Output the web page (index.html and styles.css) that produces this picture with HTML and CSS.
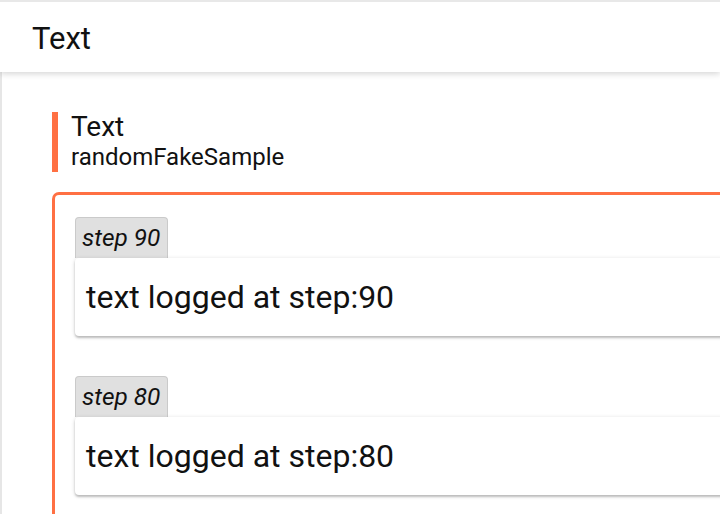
FILE: index.html
```html
<!DOCTYPE html>
<html>
<head>
<meta charset="utf-8">
<link rel="stylesheet" href="styles.css">
</head>
<body>
<div class="page">
  <header class="topbar">Text</header>
  <main class="content">
    <div class="run-title">
      <div class="tag-name">Text</div>
      <div class="run-name">randomFakeSample</div>
    </div>
    <section class="run-box">
      <div class="entry">
        <div class="step-tab">step 90</div>
        <div class="entry-card">text logged at step:90</div>
      </div>
      <div class="entry">
        <div class="step-tab">step 80</div>
        <div class="entry-card">text logged at step:80</div>
      </div>
    </section>
  </main>
</div>
</body>
</html>
```
FILE: styles.css
```css
html, body {
  margin: 0;
  padding: 0;
  overflow: hidden;
  background: #fff;
}
body {
  font-family: Roboto, "Liberation Sans", sans-serif;
  color: #111;
}
.page {
  border-top: 2px solid #e8e8e8;
  height: 100vh;
  box-sizing: border-box;
  display: flex;
  flex-direction: column;
  overflow: hidden;
}
.topbar {
  position: relative;
  z-index: 2;
  flex: none;
  height: 70px;
  box-sizing: border-box;
  padding: 19px 0 0 32px;
  font-size: 31px;
  line-height: 36px;
  background: #fff;
  box-shadow: 0 2px 6px rgba(0, 0, 0, 0.16);
}
.content {
  flex: 1;
  min-height: 0;
  overflow: hidden;
  border-left: 2px solid #e6e6e6;
  padding: 40px 0 0 50px;
}
.run-title {
  border-left: 6px solid #ff7043;
  padding-left: 13px;
  height: 60px;
  box-sizing: border-box;
}
.tag-name {
  font-size: 28px;
  line-height: 30px;
}
.run-name {
  font-size: 24px;
  line-height: 30px;
}
.run-box {
  margin-top: 20px;
  margin-right: -40px;
  border-left: 3px solid #ff7043;
  border-top: 3px solid #ff7043;
  border-top-left-radius: 7px;
  padding: 22px 0 40px 20px;
}
.entry {
  margin-bottom: 40px;
}
.step-tab {
  display: inline-block;
  background: #e0e0e0;
  border: 1px solid #cacaca;
  border-bottom: none;
  border-radius: 4px 4px 0 0;
  padding: 6px 7px 6px 6px;
  font-size: 24.4px;
  font-style: italic;
  line-height: 28px;
  vertical-align: top;
}
.entry-card {
  position: relative;
  background: #fff;
  border-radius: 4px;
  padding: 20px 11px 20px;
  font-size: 32px;
  line-height: 38px;
  box-shadow: 0 1px 4px rgba(0, 0, 0, 0.16), 0 2px 2px rgba(0, 0, 0, 0.18);
}
```
